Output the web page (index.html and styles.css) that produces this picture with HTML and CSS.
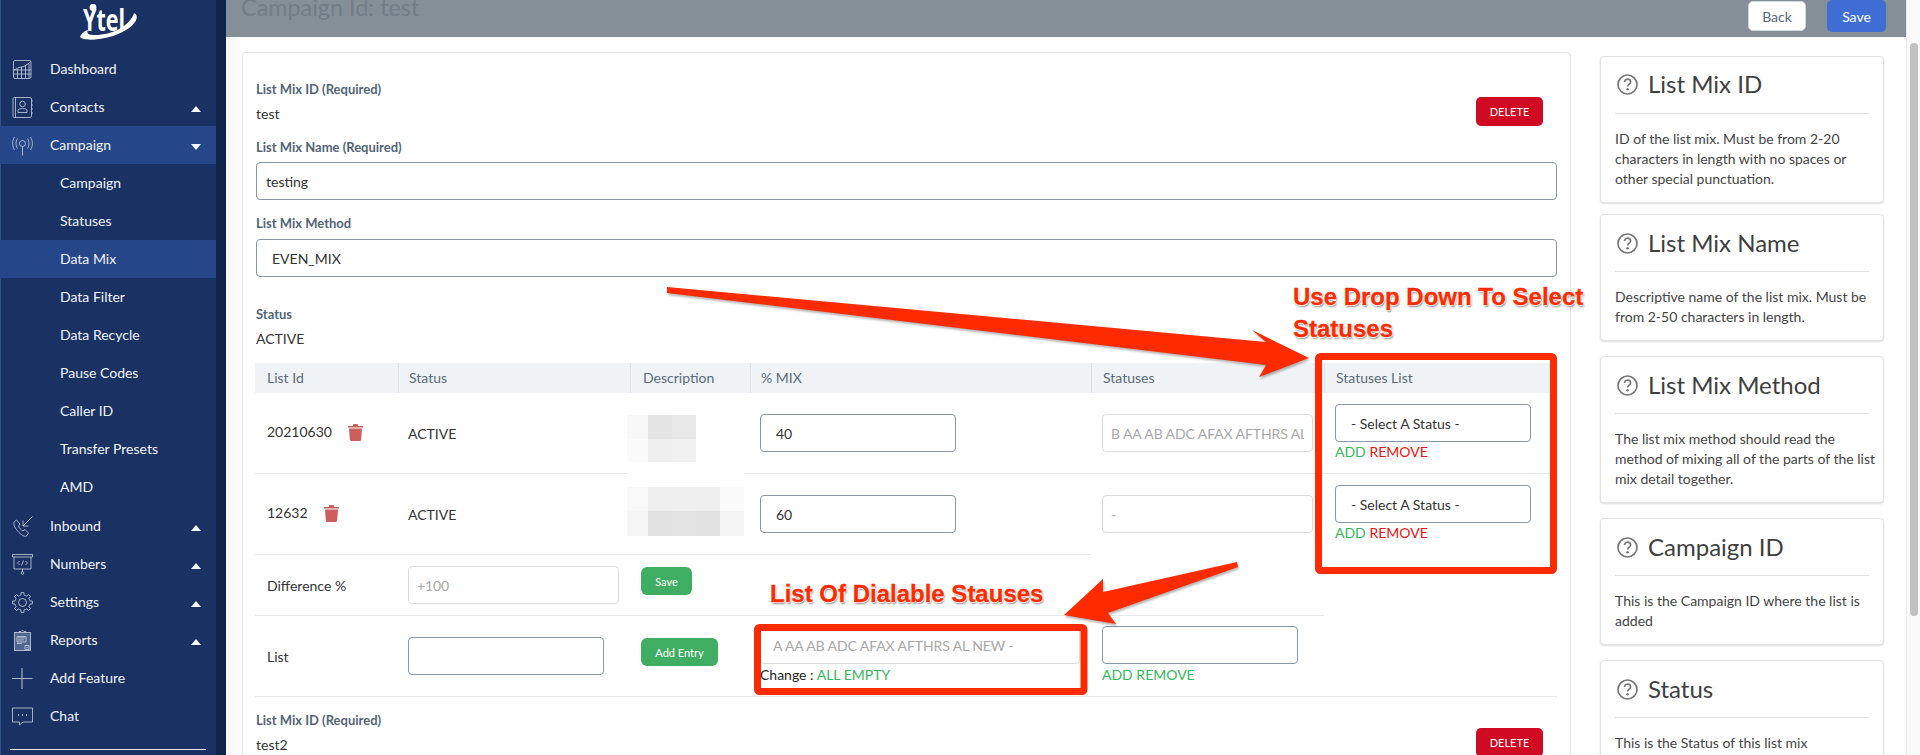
FILE: index.html
```html
<!DOCTYPE html>
<html lang="en">
<head>
<meta charset="utf-8">
<title>Campaign Id: test</title>
<link rel="stylesheet" href="styles.css">
</head>
<body>
<div class="app">
  <aside class="sidebar">
    <div class="logo">
      <svg width="60" height="36" viewBox="0 0 60 36">
        <circle cx="13" cy="3.5" r="3.4" fill="#fff"/>
        <text x="3" y="27" class="logo-text" textLength="42" lengthAdjust="spacingAndGlyphs">Ytel</text>
        <path d="M0 33C1 30 4 27 8 26C6 30 9 31 15 31C32 31 50 22 54 9C60 12 56 20 46 26C30 36 4 38 0 33Z" fill="#fff"/>
      </svg>
    </div>
    <nav class="nav">
      <a class="nav-item">
        <svg class="nav-icon" viewBox="0 0 21 21"><rect x="1.5" y="1.5" width="17.5" height="18" rx="1.5"/><path d="M1.5 11H19M1.5 15H19M5.5 10V19.5M9.5 8V19.5M13.5 6V19.5M17 5V19.5M2 11L7 8.5L12 7.5L18 3.5"/></svg>
        <span>Dashboard</span>
      </a>
      <a class="nav-item">
        <svg class="nav-icon" viewBox="0 0 21 21"><rect x="1" y="0.5" width="18.5" height="20" rx="1.5"/><path d="M3.5 0.5V20.5M19.5 4H21M19.5 8H21M19.5 12H21M19.5 16H21"/><circle cx="10.5" cy="7" r="2.8"/><path d="M6 15.5V13.5C6 12 8 11.5 10.5 11.5S15 12 15 13.5V15.5Z"/></svg>
        <span>Contacts</span>
        <i class="caret caret-up"></i>
      </a>
      <a class="nav-item is-active">
        <svg class="nav-icon" viewBox="0 0 21 21"><circle cx="10.5" cy="8.5" r="3"/><path d="M10.5 11.5V20.5M5.5 3.5C3.5 6.5 3.5 10.5 5.5 13.5M15.5 3.5C17.5 6.5 17.5 10.5 15.5 13.5M2.5 2C0 6 0 11 2.5 15M18.5 2C21 6 21 11 18.5 15"/></svg>
        <span>Campaign</span>
        <i class="caret caret-down"></i>
      </a>
      <a class="nav-item nav-sub">Campaign</a>
      <a class="nav-item nav-sub">Statuses</a>
      <a class="nav-item nav-sub is-active">Data Mix</a>
      <a class="nav-item nav-sub">Data Filter</a>
      <a class="nav-item nav-sub">Data Recycle</a>
      <a class="nav-item nav-sub">Pause Codes</a>
      <a class="nav-item nav-sub">Caller ID</a>
      <a class="nav-item nav-sub">Transfer Presets</a>
      <a class="nav-item nav-sub nav-sub-last">AMD</a>
      <a class="nav-item">
        <svg class="nav-icon" viewBox="0 0 21 21"><path d="M2.5 5.5L4.5 4L8 8L6.5 10C7.5 12.5 9 14 11 15L13 13.5L16.5 17L14.5 20C13 21 10 19.5 7 16.5C3.5 13 0.5 8 2.5 5.5Z"/><path d="M20.5 0.5L11 10M11 4.5V10H16.5"/></svg>
        <span>Inbound</span>
        <i class="caret caret-up"></i>
      </a>
      <a class="nav-item">
        <svg class="nav-icon" viewBox="0 0 21 21"><path d="M0.5 0.5H20.5V3H0.5ZM2 3V15H19V3M10.5 15V18"/><circle cx="10.5" cy="19" r="1.3"/><path d="M7.5 7L5.5 9L7.5 11M13.5 7L15.5 9L13.5 11M11.5 6.5L9.5 11.5"/></svg>
        <span>Numbers</span>
        <i class="caret caret-up"></i>
      </a>
      <a class="nav-item">
        <svg class="nav-icon" viewBox="0 0 21 21">
          <defs><path id="tooth" d="M7.6 3.48L8.92 3.07L9.11 .6H11.89L12.08 3.07L13.4 3.48"/></defs>
          <use href="#tooth"/>
          <use href="#tooth" transform="rotate(45 10.5 10.5)"/>
          <use href="#tooth" transform="rotate(90 10.5 10.5)"/>
          <use href="#tooth" transform="rotate(135 10.5 10.5)"/>
          <use href="#tooth" transform="rotate(180 10.5 10.5)"/>
          <use href="#tooth" transform="rotate(225 10.5 10.5)"/>
          <use href="#tooth" transform="rotate(270 10.5 10.5)"/>
          <use href="#tooth" transform="rotate(315 10.5 10.5)"/>
          <circle cx="10.5" cy="10.5" r="4"/>
        </svg>
        <span>Settings</span>
        <i class="caret caret-up"></i>
      </a>
      <a class="nav-item">
        <svg class="nav-icon" viewBox="0 0 21 21"><rect x="2.5" y="2.5" width="16" height="18" class="icon-tint"/><path d="M7 2.5V1.5H9C9.5 .3 11.5 .3 12 1.5H14V2.5M5 6.5H14V12H5ZM6 8H13M6 10H12M5 13.5H10M13 15.5H17V19.5H13ZM14.5 18L16 16.5"/></svg>
        <span>Reports</span>
        <i class="caret caret-up"></i>
      </a>
      <a class="nav-item">
        <svg class="nav-icon icon-bold" viewBox="0 0 21 21"><path d="M0 10.5H20.5M10 0V21"/></svg>
        <span>Add Feature</span>
      </a>
      <a class="nav-item">
        <svg class="nav-icon" viewBox="0 0 21 21"><path d="M0.5 2H20.5V16H11L7.5 19V16H0.5Z"/><path class="icon-dots" d="M6 9H6.8M10 9H10.8M14 9H14.8"/></svg>
        <span>Chat</span>
      </a>
    </nav>
    <div class="side-rule"></div>
  </aside>

  <main class="main">
    <header class="topbar">
      <h1 class="page-title">Campaign Id: test</h1>
      <div class="top-actions">
        <button class="btn-back">Back</button>
        <button class="btn-save">Save</button>
      </div>
    </header>

    <div class="content">
      <section class="panel">
        <div class="id-row">
          <div>
            <div class="label">List Mix ID (Required)</div>
            <div class="value">test</div>
          </div>
          <button class="btn-delete">DELETE</button>
        </div>
        <div class="label label-name">List Mix Name (Required)</div>
        <input class="field field-name" value="testing">
        <div class="label label-method">List Mix Method</div>
        <select class="field field-select"><option>EVEN_MIX</option></select>
        <div class="label label-status">Status</div>
        <div class="value">ACTIVE</div>

        <div class="mix-table">
          <div class="tr tr-head">
            <div class="th">List Id</div>
            <div class="th">Status</div>
            <div class="th">Description</div>
            <div class="th">% MIX</div>
            <div class="th">Statuses</div>
            <div class="th">Statuses List</div>
          </div>

          <div class="tr tr-data">
            <div class="td td-id"><span class="id-text">20210630</span><svg class="trash" viewBox="0 0 15 17"><path d="M5 2V.8C5 .3 5.4 0 5.8 0H9.2C9.6 0 10 .3 10 .8V2H15V3.6H0V2Z"/><path d="M1 4.4H14L13.1 15.8C13 16.5 12.5 17 11.8 17H3.2C2.5 17 2 16.5 1.9 15.8Z"/></svg></div>
            <div class="td td-plain">ACTIVE</div>
            <div class="td"></div>
            <div class="td td-c4"><input class="field field-num" value="40"></div>
            <div class="td td-c5"><input class="field field-soft" value="B AA AB ADC AFAX AFTHRS AL NEW -"></div>
            <div class="td td-list">
              <select class="field field-select field-status"><option>- Select A Status -</option></select>
              <div class="links"><span class="green">ADD</span> <span class="red">REMOVE</span></div>
            </div>
          </div>

          <div class="tr tr-data">
            <div class="td td-id"><span class="id-text">12632</span><svg class="trash" viewBox="0 0 15 17"><path d="M5 2V.8C5 .3 5.4 0 5.8 0H9.2C9.6 0 10 .3 10 .8V2H15V3.6H0V2Z"/><path d="M1 4.4H14L13.1 15.8C13 16.5 12.5 17 11.8 17H3.2C2.5 17 2 16.5 1.9 15.8Z"/></svg></div>
            <div class="td td-plain">ACTIVE</div>
            <div class="td"></div>
            <div class="td td-c4"><input class="field field-num" value="60"></div>
            <div class="td td-c5 no-line"><input class="field field-soft" value="-"></div>
            <div class="td td-list no-line">
              <select class="field field-select field-status"><option>- Select A Status -</option></select>
              <div class="links"><span class="green">ADD</span> <span class="red">REMOVE</span></div>
            </div>
          </div>

          <div class="tr tr-diff">
            <div class="td td-id">Difference %</div>
            <div class="td td-c2"><input class="field field-soft field-diff" placeholder="+100"></div>
            <div class="td td-btn"><button class="btn-green btn-small">Save</button></div>
            <div class="td"></div>
            <div class="td"></div>
            <div class="td no-line"></div>
          </div>

          <div class="tr tr-add">
            <div class="td td-id">List</div>
            <div class="td td-c2"><input class="field field-list"></div>
            <div class="td td-btn"><button class="btn-green btn-entry">Add Entry</button></div>
            <div class="td td-c4 td-stack">
              <input class="field field-soft field-wide" value="A AA AB ADC AFAX AFTHRS AL NEW -">
              <div class="change">Change : <span class="green">ALL EMPTY</span></div>
            </div>
            <div class="td td-c5 td-stack">
              <input class="field field-list">
              <div class="change"><span class="green">ADD REMOVE</span></div>
            </div>
            <div class="td"></div>
          </div>

          <svg class="blur" width="117" height="121" viewBox="0 0 117 121">
            <rect width="117" height="121" fill="#fff"/>
            <rect x="0" y="0" width="21" height="24" fill="#f8f8f8"/>
            <rect x="21" y="0" width="24" height="24" fill="#e4e4e4"/>
            <rect x="45" y="0" width="24" height="24" fill="#e8e8e8"/>
            <rect x="0" y="24" width="21" height="23" fill="#fbfbfb"/>
            <rect x="21" y="24" width="24" height="23" fill="#efefef"/>
            <rect x="45" y="24" width="24" height="23" fill="#f1f1f1"/>
            <rect x="0" y="72" width="21" height="24" fill="#f9f9f9"/>
            <rect x="21" y="72" width="72" height="24" fill="#efefef"/>
            <rect x="93" y="72" width="24" height="24" fill="#fbfbfb"/>
            <rect x="0" y="96" width="21" height="25" fill="#f6f6f6"/>
            <rect x="21" y="96" width="24" height="25" fill="#e2e2e2"/>
            <rect x="45" y="96" width="24" height="25" fill="#e5e5e5"/>
            <rect x="69" y="96" width="24" height="25" fill="#e2e2e2"/>
            <rect x="93" y="96" width="24" height="25" fill="#f5f5f5"/>
          </svg>
        </div>

        <div class="id-row id-row-next">
          <div>
            <div class="label">List Mix ID (Required)</div>
            <div class="value">test2</div>
          </div>
          <button class="btn-delete">DELETE</button>
        </div>
      </section>

      <aside class="help">
        <article class="help-card help-first">
          <h2 class="help-title"><svg class="help-icon" viewBox="0 0 21 21"><circle cx="10.5" cy="10.5" r="9.5"/><path d="M7.5 8C7.5 6.2 9 5.2 10.6 5.2C12.3 5.2 13.6 6.3 13.6 7.9C13.6 10 10.6 10.2 10.6 12.5"/><circle class="help-dot" cx="10.6" cy="15.3" r="1.2"/></svg>List Mix ID</h2>
          <p class="help-text">ID of the list mix. Must be from 2-20 characters in length with no spaces or other special punctuation.</p>
        </article>
        <article class="help-card">
          <h2 class="help-title"><svg class="help-icon" viewBox="0 0 21 21"><circle cx="10.5" cy="10.5" r="9.5"/><path d="M7.5 8C7.5 6.2 9 5.2 10.6 5.2C12.3 5.2 13.6 6.3 13.6 7.9C13.6 10 10.6 10.2 10.6 12.5"/><circle class="help-dot" cx="10.6" cy="15.3" r="1.2"/></svg>List Mix Name</h2>
          <p class="help-text">Descriptive name of the list mix. Must be from 2-50 characters in length.</p>
        </article>
        <article class="help-card">
          <h2 class="help-title"><svg class="help-icon" viewBox="0 0 21 21"><circle cx="10.5" cy="10.5" r="9.5"/><path d="M7.5 8C7.5 6.2 9 5.2 10.6 5.2C12.3 5.2 13.6 6.3 13.6 7.9C13.6 10 10.6 10.2 10.6 12.5"/><circle class="help-dot" cx="10.6" cy="15.3" r="1.2"/></svg>List Mix Method</h2>
          <p class="help-text">The list mix method should read the method of mixing all of the parts of the list mix detail together.</p>
        </article>
        <article class="help-card">
          <h2 class="help-title"><svg class="help-icon" viewBox="0 0 21 21"><circle cx="10.5" cy="10.5" r="9.5"/><path d="M7.5 8C7.5 6.2 9 5.2 10.6 5.2C12.3 5.2 13.6 6.3 13.6 7.9C13.6 10 10.6 10.2 10.6 12.5"/><circle class="help-dot" cx="10.6" cy="15.3" r="1.2"/></svg>Campaign ID</h2>
          <p class="help-text">This is the Campaign ID where the list is added</p>
        </article>
        <article class="help-card">
          <h2 class="help-title"><svg class="help-icon" viewBox="0 0 21 21"><circle cx="10.5" cy="10.5" r="9.5"/><path d="M7.5 8C7.5 6.2 9 5.2 10.6 5.2C12.3 5.2 13.6 6.3 13.6 7.9C13.6 10 10.6 10.2 10.6 12.5"/><circle class="help-dot" cx="10.6" cy="15.3" r="1.2"/></svg>Status</h2>
          <p class="help-text">This is the Status of this list mix</p>
        </article>
      </aside>
    </div>
  </main>

  <div class="scrollbar"><div class="scroll-thumb"></div></div>

  <div class="annotations">
    <svg class="annot-art" width="1920" height="755" viewBox="0 0 1920 755">
      <polygon class="annot-fill" points="667,287 667,293 1266,365 1259,377 1309,358 1252,330 1266,342"/>
      <polygon class="annot-fill" points="1237,562 1238,567 1108,613 1116,624 1064,615 1103,579 1103,592"/>
      <rect class="annot-box" x="1318.5" y="356.5" width="235" height="214" rx="2"/>
      <rect class="annot-box" x="757.5" y="627.5" width="326.5" height="64" rx="2"/>
    </svg>
    <div class="annot-text annot-one">Use Drop Down To Select<br>Statuses</div>
    <div class="annot-text annot-two">List Of Dialable Stauses</div>
  </div>
</div>
</body>
</html>
```

FILE: styles.css
```css
* { box-sizing: border-box; }
html, body { margin: 0; height: 755px; overflow: hidden; }
body { font-family: Lato, "Open Sans", sans-serif; font-size: 14px; color: #333; background: #fff; text-rendering: optimizeLegibility; }
.app { position: relative; display: flex; width: 1920px; height: 755px; overflow: hidden; }

/* Sidebar */
.sidebar { flex: 0 0 226px; height: 755px; background: #1a3263; border-right: 10px solid #0f2248; box-shadow: inset 1px 0 0 #2f5288; }
.logo { height: 50px; padding: 4px 0 0 80px; }
.logo svg { display: block; overflow: visible; }
.logo-text { font-family: "Open Sans", Lato, sans-serif; font-weight: 700; font-size: 30px; fill: #fff; }
.nav { display: flex; flex-direction: column; }
.nav-item { display: flex; align-items: center; height: 38px; padding: 0 15px 2px 12px; color: #f1f3f7; font-size: 14px; }
.nav-item.is-active { background: #26468a; }
.nav-sub { padding-left: 60px; }
.nav-sub-last { margin-bottom: 1px; }
.nav-icon { flex: none; width: 21px; height: 21px; margin-right: 17px; fill: none; stroke: #c9d1e0; stroke-width: .8; margin-top: 2px; }
.icon-bold { stroke: #aab5cb; stroke-width: 1.1; }
.icon-dots { stroke: #fff; stroke-width: 1.4; }
.icon-tint { fill: #51678f; }
.caret { margin-left: auto; width: 0; height: 0; border-left: 5.5px solid transparent; border-right: 5.5px solid transparent; }
.caret-up { border-bottom: 6px solid #f4f6f9; margin-top: 5px; }
.caret-down { border-top: 6px solid #f4f6f9; margin-top: 5px; }
.side-rule { height: 1px; margin: 14px 10px 0; background: #e6e9ef; }

/* Main */
.main { flex: 0 0 1680px; height: 755px; overflow: hidden; background: linear-gradient(90deg, #f6f7f7 0, #fbfbfb 12px, #fff 16px); }
.topbar { display: flex; justify-content: space-between; height: 37px; padding: 0 20px 0 15px; background: #858f98; overflow: hidden; }
.page-title { margin: -7px 0 0; font-size: 23.4px; line-height: 28px; font-weight: 400; color: #737d87; }
.top-actions { display: flex; align-items: flex-start; gap: 21px; }
.btn-back { width: 58px; height: 30px; margin-top: 1px; background: #fff; border: 1px solid #d3d8dc; border-radius: 5px; font: 14px Lato, sans-serif; color: #56677a; padding: 0; }
.btn-save { width: 59px; height: 32px; background: #3f6fd4; border: 0; border-radius: 5px; font: 14px Lato, sans-serif; color: #fff; padding: 0; }

.content { display: flex; align-items: flex-start; gap: 29px; padding: 15px 0 0 16px; }
.panel { flex: 0 0 1329px; height: 760px; padding: 27px 13px 0; background: #fff; border: 1px solid #e3e3e3; border-radius: 4px; }
.label { height: 18px; font-size: 13px; line-height: 18px; font-weight: 700; color: #526576; }
.value { height: 20px; margin-top: 6px; font-size: 14px; line-height: 20px; color: #333; }
.id-row { display: flex; justify-content: space-between; align-items: flex-start; height: 44px; }
.id-row-next { margin-top: 14px; }
.btn-delete { width: 67px; height: 29px; margin: 17px 14px 0 0; padding: 0; background: #cf0a22; border: 0; border-radius: 5px; color: #fff; font: 11px Lato, sans-serif; }
.label-name { margin-top: 14px; }
.label-method { margin-top: 14px; }
.label-status { margin-top: 28px; }
.field { display: block; height: 38px; width: 100%; border: 1px solid #8a96a3; border-radius: 4px; background: #fff; font: 14px Lato, sans-serif; color: #333; padding: 0 9px; outline: 0; appearance: none; text-rendering: optimizeLegibility; }
.field-name { margin-top: 6px; }
.field-select { padding: 0 15px; }
.panel > .field-select { margin-top: 7px; }
.field-status { width: 196px; }
.field-num { width: 196px; padding: 0 15px; }
.field-soft { border-color: #d9dcdf; color: #a8a8a8; padding: 0 8px; width: 211px; letter-spacing: -.1px; }
.field-soft::placeholder { color: #a8a8a8; }
.field-diff { width: 211px; }
.field-list { width: 196px; }
.field-wide { width: 320px; padding: 0 12px; }

/* Table */
.mix-table { position: relative; margin: 14px 0 0 -1px; width: 1302px; }
.tr { display: grid; grid-template-columns: 143px 232px 120px 341px 233px 233px; }
.tr-head { height: 30px; background: #eff3f6; }
.th { padding-left: 11px; font-size: 14px; line-height: 30px; color: #5b6b7b; border-left: 1px solid #dde2e6; }
.th:first-child { padding-left: 12px; border-left: 0; }
.th:nth-child(3) { padding-left: 12px; }
.th:nth-child(2), .th:nth-child(4) { padding-left: 10px; }
.tr-data { height: 81px; }
.tr-diff { height: 61px; }
.tr-add { height: 81px; }
.td { display: flex; align-items: center; border-bottom: 1px solid #e6e8ea; }
.td.no-line { border-bottom-color: transparent; }
.td-id { padding-left: 12px; color: #333; }
.id-text { margin-top: -4px; }
.trash { width: 15px; height: 17px; margin-left: 16px; fill: #cd5c5c; margin-top: -2px; }
.td-plain { padding-left: 10px; color: #333; }
.td-c2 { padding-left: 10px; }
.td-c4 { padding-left: 10px; }
.td-c5 { padding-left: 11px; }
.td-btn { padding-left: 11px; align-items: flex-start; }
.tr-diff .td-btn { padding-top: 12px; }
.tr-add .td-btn { padding-top: 22px; }
.td-list { display: block; padding: 11px 0 0 11px; }
.td-stack { display: block; padding-top: 10px; }
.links { margin-top: 1px; line-height: 18px; font-size: 14px; }
.change { margin-top: 2px; line-height: 18px; color: #222; font-size: 14px; white-space: nowrap; }
.green { color: #35b85b; }
.red { color: #ef1010; }
.btn-green { height: 28px; padding: 0; background: #3fae62; border: 0; border-radius: 6px; color: #fff; font: 11px Lato, sans-serif; text-rendering: optimizeLegibility; }
.btn-small { width: 51px; }
.btn-entry { width: 77px; }
.blur { position: absolute; left: 372px; top: 52px; display: block; }

/* Help rail */
.help { flex: 0 0 284px; margin-top: 4px; display: flex; flex-direction: column; gap: 15px; }
.help-first { margin-bottom: -4px; }
.help-card { background: #fff; border: 1px solid #e3e3e3; border-radius: 4px; padding: 12px 4px 13px 14px; box-shadow: 0 1px 2px rgba(0,0,0,.14); }
.help-title { display: flex; align-items: center; box-sizing: content-box; height: 30px; margin: 0 10px 15px 0; padding: 1px 0 13px 2px; border-bottom: 1px solid #e2e2e2; font-size: 24px; line-height: 30px; font-weight: 400; color: #3f3f3f; }
.help-first .help-title { padding-top: 0; padding-bottom: 14px; }
.help-icon { width: 21px; height: 21px; margin-right: 10px; flex: none; fill: none; stroke: #777; stroke-width: 1.7; }
.help-dot { fill: #777; stroke: none; }
.help-text { margin: 0; font-size: 14px; line-height: 20px; color: #444; }

/* Scrollbar */
.scrollbar { flex: 0 0 14px; height: 755px; padding: 43px 0 0 3px; background: #fafafa; border-left: 1px solid #e8e8e8; }
.scroll-thumb { width: 8px; height: 573px; border-radius: 4px; background: #c1c1c1; }

/* Annotations drawn over the screenshot */
.annotations { position: absolute; inset: 0; pointer-events: none; }
.annot-art { position: absolute; left: 0; top: 0; display: block; }
.annot-fill { fill: #fe2b00; filter: drop-shadow(1px 2px 1px rgba(0,0,0,.3)); }
.annot-box { fill: none; stroke: #fe2b00; stroke-width: 7; }
.annot-text { position: absolute; font-family: "Liberation Sans", Arial, sans-serif; font-weight: 700; font-size: 24px; line-height: 32px; color: #fe2b00; -webkit-text-stroke: .3px #fe2b00; text-shadow: 1px 0 0 #fff, -1px 0 0 #fff, 0 1px 0 #fff, 0 -1px 0 #fff, 1px 2px 2px rgba(0,0,0,.45); white-space: nowrap; }
.annot-one { left: 1293px; top: 281px; }
.annot-two { left: 770px; top: 578px; }
```
